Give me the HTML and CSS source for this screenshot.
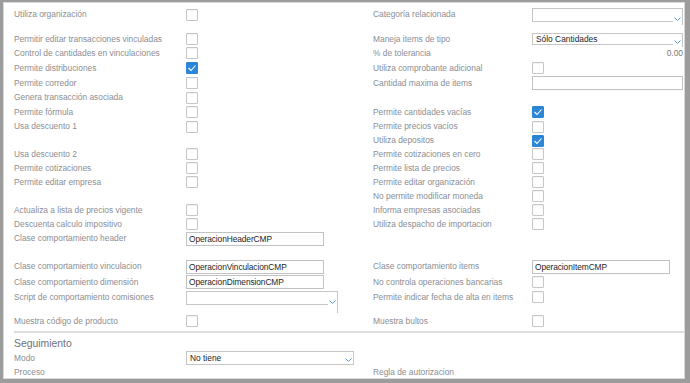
FILE: index.html
```html
<!DOCTYPE html>
<html>
<head>
    <meta charset="utf-8">
    <link rel="stylesheet" href="styles.css">
</head>
<body>
    <div class="panel">
        <div class="row h15">
            <span class="lbl">Utiliza organización</span>
            <span class="ctl"><span class="cb"></span></span>
            <span class="lbl">Categoría relacionada</span>
            <span class="ctl"><div class="select"><span class="select-btn ext3"><svg class="chevron" width="7" height="4" viewBox="0 0 7 4"><polyline points="0.5,0.5 3.5,3.5 6.5,0.5"/></svg></span></div></span>
        </div>
        <div class="spacer sp10"></div>
        <div class="row h14">
            <span class="lbl">Permitir editar transacciones vinculadas</span>
            <span class="ctl"><span class="cb"></span></span>
            <span class="lbl">Maneja items de tipo</span>
            <span class="ctl"><div class="select short"><span class="select-text">Sólo Cantidades</span><span class="select-btn ext2"><svg class="chevron" width="7" height="4" viewBox="0 0 7 4"><polyline points="0.5,0.5 3.5,3.5 6.5,0.5"/></svg></span></div></span>
        </div>
        <div class="row h14">
            <span class="lbl">Control de cantidades en vinculaciones</span>
            <span class="ctl"><span class="cb"></span></span>
            <span class="lbl">% de tolerancia</span>
            <span class="ctl num">0.00</span>
        </div>
        <div class="row h16">
            <span class="lbl">Permite distribuciones</span>
            <span class="ctl"><span class="cb on"><svg width="10" height="10" viewBox="0 0 10 10"><polyline points="1.5,5 4,7.5 8.5,2.5"/></svg></span></span>
            <span class="lbl">Utiliza comprobante adicional</span>
            <span class="ctl"><span class="cb"></span></span>
        </div>
        <div class="row h14">
            <span class="lbl">Permite corredor</span>
            <span class="ctl"><span class="cb"></span></span>
            <span class="lbl">Cantidad maxima de items</span>
            <span class="ctl"><div class="input full"></div></span>
        </div>
        <div class="row h15">
            <span class="lbl">Genera transacción asociada</span>
            <span class="ctl"><span class="cb"></span></span>
            <span></span>
            <span></span>
        </div>
        <div class="row h14">
            <span class="lbl">Permite fórmula</span>
            <span class="ctl"><span class="cb"></span></span>
            <span class="lbl">Permite cantidades vacías</span>
            <span class="ctl"><span class="cb on"><svg width="10" height="10" viewBox="0 0 10 10"><polyline points="1.5,5 4,7.5 8.5,2.5"/></svg></span></span>
        </div>
        <div class="row h15">
            <span class="lbl">Usa descuento 1</span>
            <span class="ctl"><span class="cb"></span></span>
            <span class="lbl">Permite precios vacíos</span>
            <span class="ctl"><span class="cb"></span></span>
        </div>
        <div class="row h13">
            <span></span>
            <span></span>
            <span class="lbl">Utiliza depositos</span>
            <span class="ctl"><span class="cb on"><svg width="10" height="10" viewBox="0 0 10 10"><polyline points="1.5,5 4,7.5 8.5,2.5"/></svg></span></span>
        </div>
        <div class="row h14">
            <span class="lbl">Usa descuento 2</span>
            <span class="ctl"><span class="cb"></span></span>
            <span class="lbl">Permite cotizaciones en cero</span>
            <span class="ctl"><span class="cb"></span></span>
        </div>
        <div class="row h14">
            <span class="lbl">Permite cotizaciones</span>
            <span class="ctl"><span class="cb"></span></span>
            <span class="lbl">Permite lista de precios</span>
            <span class="ctl"><span class="cb"></span></span>
        </div>
        <div class="row h14">
            <span class="lbl">Permite editar empresa</span>
            <span class="ctl"><span class="cb"></span></span>
            <span class="lbl">Permite editar organización</span>
            <span class="ctl"><span class="cb"></span></span>
        </div>
        <div class="row h14">
            <span></span>
            <span></span>
            <span class="lbl">No permite modificar moneda</span>
            <span class="ctl"><span class="cb"></span></span>
        </div>
        <div class="row h14">
            <span class="lbl">Actualiza a lista de precios vigente</span>
            <span class="ctl"><span class="cb"></span></span>
            <span class="lbl">Informa empresas asociadas</span>
            <span class="ctl"><span class="cb"></span></span>
        </div>
        <div class="row h14">
            <span class="lbl">Descuenta calculo impositivo</span>
            <span class="ctl"><span class="cb"></span></span>
            <span class="lbl">Utiliza despacho de importacion</span>
            <span class="ctl"><span class="cb"></span></span>
        </div>
        <div class="row h15">
            <span class="lbl">Clase comportamiento header</span>
            <span class="ctl"><div class="input">OperacionHeaderCMP</div></span>
            <span></span>
            <span></span>
        </div>
        <div class="spacer sp13"></div>
        <div class="row h15">
            <span class="lbl">Clase comportamiento vinculacion</span>
            <span class="ctl"><div class="input">OperacionVinculacionCMP</div></span>
            <span class="lbl">Clase comportamiento items</span>
            <span class="ctl"><div class="input">OperacionItemCMP</div></span>
        </div>
        <div class="row h16">
            <span class="lbl">Clase comportamiento dimensión</span>
            <span class="ctl"><div class="input">OperacionDimensionCMP</div></span>
            <span class="lbl">No controla operaciones bancarias</span>
            <span class="ctl"><span class="cb"></span></span>
        </div>
        <div class="row h23 top">
            <span class="lbl">Script de comportamiento comisiones</span>
            <span class="ctl"><div class="select script"><span class="select-btn ext8"><svg class="chevron" width="7" height="4" viewBox="0 0 7 4"><polyline points="0.5,0.5 3.5,3.5 6.5,0.5"/></svg></span></div></span>
            <span class="lbl">Permite indicar fecha de alta en items</span>
            <span class="ctl"><span class="cb"></span></span>
        </div>
        <div class="spacer sp1"></div>
        <div class="row h14">
            <span class="lbl">Muestra código de producto</span>
            <span class="ctl"><span class="cb"></span></span>
            <span class="lbl">Muestra bultos</span>
            <span class="ctl"><span class="cb"></span></span>
        </div>

        <div class="sep"></div>
        <div class="section-title">Seguimiento</div>
        <div class="row h14">
            <span class="lbl">Modo</span>
            <span class="ctl"><div class="select modo"><span class="select-text">No tiene</span><span class="select-btn"><svg class="chevron" width="7" height="4" viewBox="0 0 7 4"><polyline points="0.5,0.5 3.5,3.5 6.5,0.5"/></svg></span></div></span>
            <span></span>
            <span></span>
        </div>
        <div class="row h15">
            <span class="lbl">Proceso</span>
            <span></span>
            <span class="lbl">Regla de autorizacion</span>
            <span></span>
        </div>
    </div>
</body>
</html>
```

FILE: styles.css
```css
* {
    box-sizing: border-box;
}

html, body {
    margin: 0;
    padding: 0;
}

body {
    width: 690px;
    height: 383px;
    overflow: hidden;
    background-color: #9c9c9c;
    padding: 2px 5px 4px 3px;
    font-family: "Liberation Sans", Arial, sans-serif;
    font-size: 8.4px;
}

.panel {
    height: 377px;
    background-color: #ffffff;
    border: 1px solid #d9d9d9;
    padding: 4px 0 0 10px;
    overflow: hidden;
}

/* four columns: label, control, label, control */
.row {
    display: grid;
    grid-template-columns: 172px 187px 159px 151px;
    align-items: center;
}

.row.top {
    align-items: start;
}

.h13 { height: 13px; }
.h14 { height: 14px; }
.h15 { height: 15px; }
.h16 { height: 16px; }
.h23 { height: 23px; }

.spacer.sp1 { height: 1px; }
.spacer.sp10 { height: 10px; }
.spacer.sp13 { height: 13px; }

.lbl {
    color: #8b8e94;
    white-space: nowrap;
    line-height: 13px;
}

.row.top .lbl {
    line-height: 14px;
}

.ctl {
    display: flex;
    align-items: center;
}

.ctl.num {
    justify-content: flex-end;
    color: #777777;
}

/* checkbox */
.cb {
    display: flex;
    align-items: center;
    justify-content: center;
    width: 12px;
    height: 12px;
    border: 1px solid #c6c6c6;
    border-radius: 1px;
    background-color: #ffffff;
    box-shadow: inset 0 1px 1px rgba(0, 0, 0, 0.05);
}

.cb.on {
    background-color: #2c87d8;
    border-color: #2c87d8;
}

.cb svg polyline {
    fill: none;
    stroke: #ffffff;
    stroke-width: 1.1;
}

/* text inputs */
.input {
    width: 138px;
    height: 14px;
    border: 1px solid #c2c2c2;
    padding: 0 2px;
    color: #1e1e1e;
    line-height: 12px;
    white-space: nowrap;
    letter-spacing: -0.1px;
}

.input.full {
    width: 151px;
}

.row.top .ctl {
    padding-top: 1px;
}

/* select boxes */
.select {
    position: relative;
    width: 141px;
    height: 14px;
    border: 1px solid #c6c6c6;
    border-right: 0;
    margin-right: 10px;
    color: #1e1e1e;
}

.select.short {
    height: 12px;
}

.select.script {
    width: 142px;
}

.select.modo {
    width: 158px;
}

.select-text {
    display: block;
    padding-left: 3px;
    line-height: 11px;
    white-space: nowrap;
}

.select.modo .select-text {
    line-height: 12px;
}

.select-btn {
    position: absolute;
    top: -1px;
    left: 100%;
    width: 10px;
    height: calc(100% + 2px);
    border-top: 1px solid #c6c6c6;
    border-right: 1px solid #c6c6c6;
    border-bottom: 1px solid #c6c6c6;
    background-color: #ffffff;
}

.select-btn.ext2 { height: calc(100% + 4px); border-bottom: 0; }
.select-btn.ext3 { height: calc(100% + 5px); border-bottom: 0; }
.select-btn.ext8 { height: calc(100% + 10px); border-bottom: 0; }

.chevron {
    position: absolute;
    left: 1px;
    top: 8px;
}

.select.short .chevron {
    top: 6px;
}

.select.modo .chevron {
    top: 6px;
}

.select.script .chevron {
    top: 8px;
}

.chevron polyline {
    fill: none;
    stroke: #5b9bd8;
    stroke-width: 1;
}

.sep {
    width: 670px;
    height: 2px;
    margin-top: 3px;
    background-color: #dedede;
}

.section-title {
    height: 15px;
    margin-top: 3px;
    color: #6f7277;
    font-size: 10.4px;
    line-height: 15px;
}
```
